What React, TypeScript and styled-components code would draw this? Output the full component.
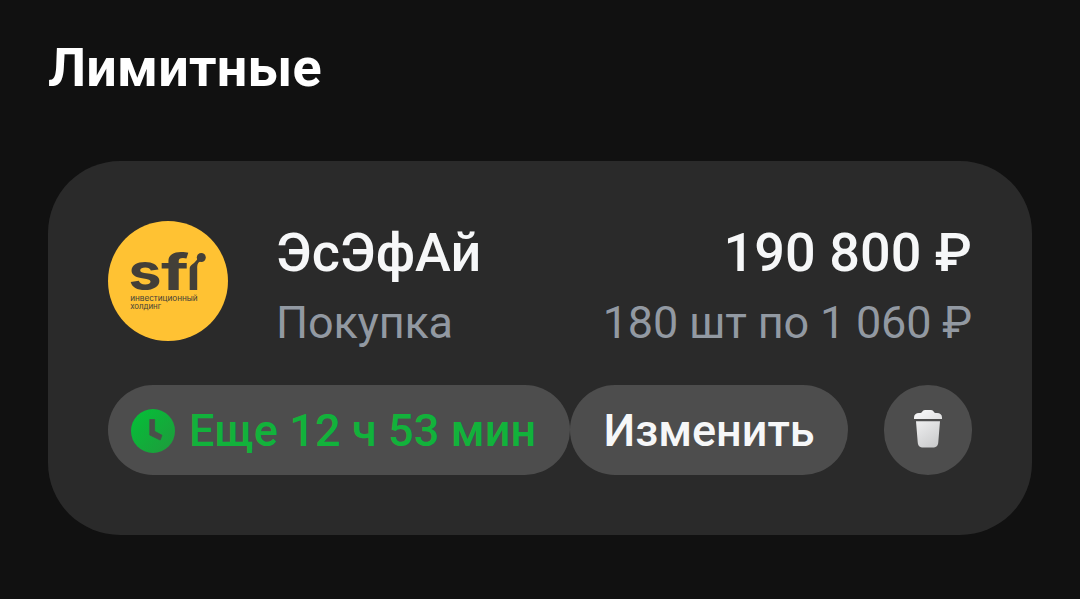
import React from 'react';
import styled, { createGlobalStyle } from 'styled-components';

const GlobalStyle = createGlobalStyle`
  * {
    box-sizing: border-box;
  }
  body {
    margin: 0;
    background: #111111;
    font-family: Roboto, "Liberation Sans", sans-serif;
  }
`;

const SfiLogo = () => (
  <Logo viewBox="0 0 120 120">
    <circle cx={60} cy={60} r={60} fill="#ffc233" />
    <g fill="#433f38" fontFamily="Inter, sans-serif" fontWeight={700}>
      <text x={20.500} y={69} fontSize={52} textLength={33} lengthAdjust="spacingAndGlyphs">s</text>
      <text x={53} y={69} fontSize={50} textLength={28} lengthAdjust="spacingAndGlyphs">f</text>
      <path d="M81.700 69V47.500C81.700 43.500 87 43 90 37L93 39.500C89.500 42 89.200 43.500 89.200 47.500V69Z" />
      <circle cx={93.300} cy={36.500} r={4.500} />
    </g>
    <g fill="#433f38" fontFamily="Inter, sans-serif" fontWeight={400} fontSize={7.4}>
      <text x={22.200} y={79.600} textLength={67.500} lengthAdjust="spacingAndGlyphs">инвестиционный</text>
      <text x={22.200} y={88.200} textLength={31} lengthAdjust="spacingAndGlyphs">холдинг</text>
    </g>
  </Logo>
);

const ClockIcon = () => (
  <svg width={44} height={44} viewBox="0 0 44 44" fill="none">
    <defs>
      <linearGradient id="clock" x1={4} y1={6} x2={40} y2={40} gradientUnits="userSpaceOnUse">
        <stop stopColor="#06bd38" />
        <stop offset={1} stopColor="#1d9d3c" />
      </linearGradient>
    </defs>
    <circle cx={22} cy={22} r={22} fill="url(#clock)" />
    <path d="M18.800 10.500H23.600V22.300L31 26.300L29.200 31L18.800 26Z" fill="#4a4f4a" stroke="#4a4f4a" strokeWidth={0.8} strokeLinejoin="round" />
  </svg>
);

const TrashIcon = () => (
  <svg width={28} height={38} viewBox="0 0 28 38">
    <defs>
      <linearGradient id="trash" x1={4} y1={4} x2={26} y2={36} gradientUnits="userSpaceOnUse">
        <stop stopColor="#f4f4f5" />
        <stop offset={1} stopColor="#c8c9ca" />
      </linearGradient>
    </defs>
    <path d="M0 9V7.500C0 4.500 2 3 5 3H6.500C8.500 3 8 0 11 0H17C20 0 19.500 3 21.500 3H23C26 3 28 4.500 28 7.500V9Z" fill="url(#trash)" />
    <path d="M2 11.300H26L24.300 32C24 36 22.500 37.500 18.500 37.500H9.500C5.500 37.500 4 36 3.700 32Z" fill="url(#trash)" />
  </svg>
);

export default function App() {
  return (
    <>
      <GlobalStyle />
      <Page>
        <Title>Лимитные</Title>
        <Card>
          <Order>
            <SfiLogo />
            <Column>
              <Primary>ЭсЭфАй</Primary>
              <Secondary>Покупка</Secondary>
            </Column>
            <Column $end>
              <Primary>190 800 ₽</Primary>
              <Secondary>180 шт по 1 060 ₽</Secondary>
            </Column>
          </Order>
          <Actions>
            <Timer>
              <ClockIcon />
              Еще 12 ч 53 мин
            </Timer>
            <EditButton>Изменить</EditButton>
            <DeleteButton aria-label="Удалить">
              <TrashIcon />
            </DeleteButton>
          </Actions>
        </Card>
      </Page>
    </>
  );
}

const Page = styled.main`
  height: 599px;
  padding: 36px 48px 0;
  overflow: hidden;
`;

const Title = styled.h1`
  margin: 0 0 61px;
  font-size: 54px;
  line-height: 64px;
  font-weight: 700;
  letter-spacing: 0.2px;
  color: #ffffff;
`;

const Card = styled.section`
  height: 374px;
  padding: 60px;
  border-radius: 72px;
  background: #2a2a2a;
`;

const Order = styled.div`
  display: flex;
  height: 120px;
`;

const Logo = styled.svg`
  flex: none;
  width: 120px;
  height: 120px;
  margin-right: 48px;
`;

/* Name on the left, amounts on the right */
const Column = styled.div<{ $end?: boolean }>`
  display: flex;
  flex-direction: column;
  align-items: ${({ $end }) => ($end ? 'flex-end' : 'flex-start')};
  margin-left: ${({ $end }) => ($end ? 'auto' : '0')};
  white-space: nowrap;
`;

const Primary = styled.div`
  font-size: 54px;
  line-height: 64px;
  font-weight: 500;
  letter-spacing: 0.06px;
  color: #f6f7f8;
`;

const Secondary = styled.div`
  margin-top: 11px;
  font-size: 45px;
  line-height: 54px;
  letter-spacing: -0.18px;
  color: #9299a2;
`;

const Actions = styled.div`
  display: flex;
  margin-top: 44px;
`;

const Pill = styled.button`
  display: flex;
  align-items: center;
  justify-content: center;
  height: 90px;
  padding: 2px 0 0;
  border: 0;
  border-radius: 45px;
  background: #4d4d4d;
  font-family: inherit;
  font-size: 45px;
  line-height: 54px;
  font-weight: 500;
  white-space: nowrap;
`;

const Timer = styled(Pill)`
  justify-content: flex-start;
  gap: 14px;
  width: 462px;
  padding-left: 23px;
  letter-spacing: 0.12px;
  color: #12b23b;
`;

const EditButton = styled(Pill)`
  width: 278px;
  color: #f6f7f8;
`;

const DeleteButton = styled(Pill)`
  width: 88px;
  margin-left: auto;
  padding: 0 0 2px;
`;
